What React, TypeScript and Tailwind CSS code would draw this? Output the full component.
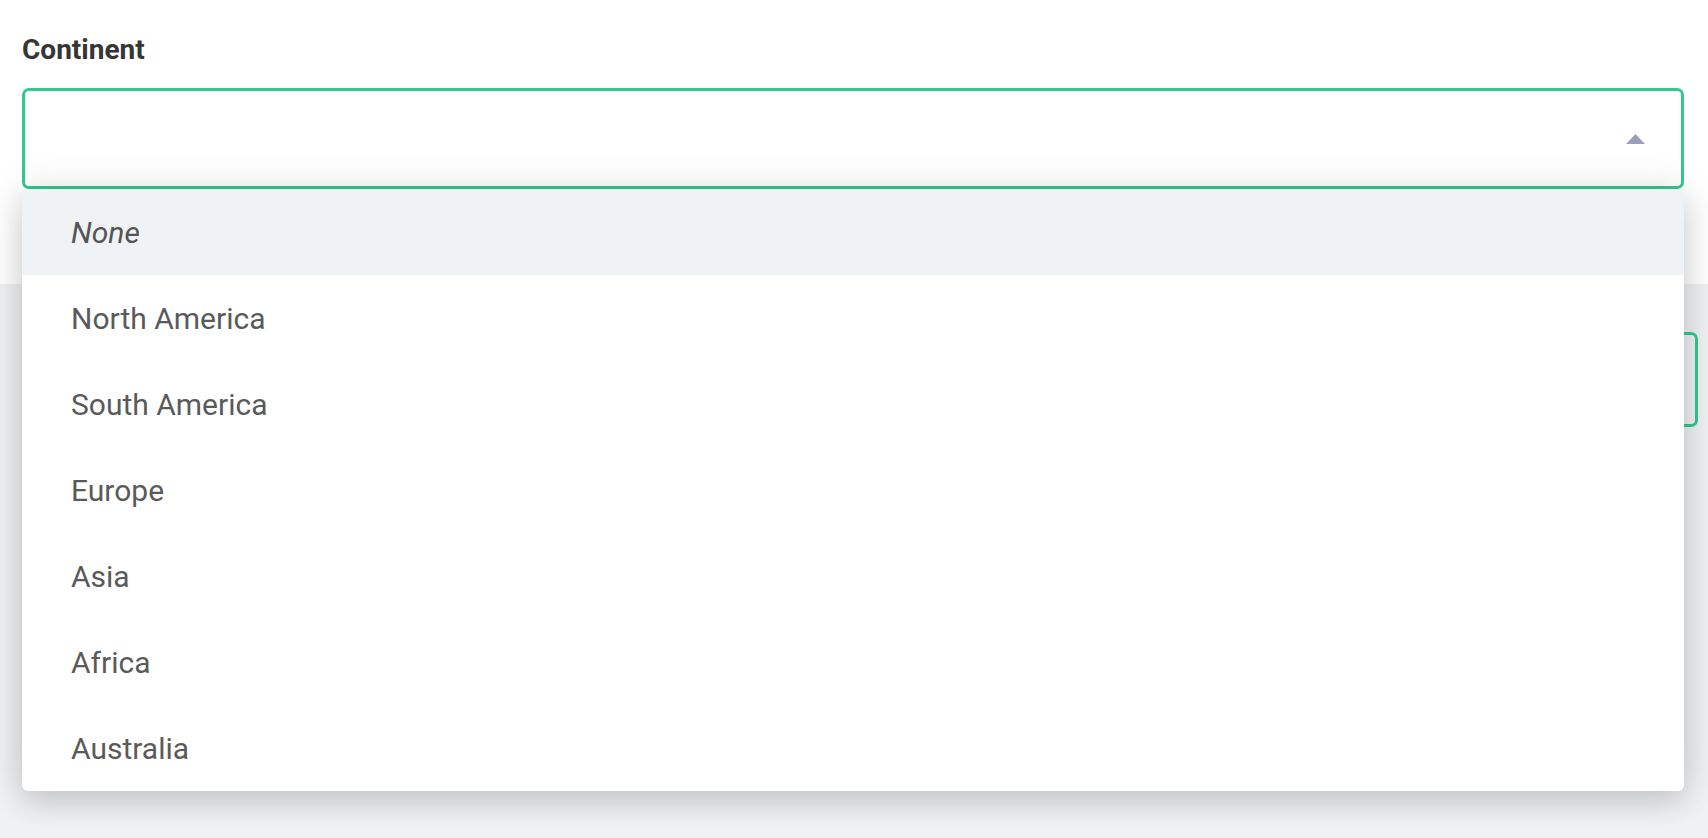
const options = [
  "North America",
  "South America",
  "Europe",
  "Asia",
  "Africa",
  "Australia",
];

const App = () => {
  return (
    <div
      className="relative h-[838px] w-full overflow-hidden bg-[#f0f1f3]"
      style={{ fontFamily: "Roboto, 'Noto Sans', sans-serif" }}
    >
      {/* top card with the open select */}
      <section className="bg-white pl-[22px] pr-[24px] pt-[33px] pb-[95px]">
        <label className="block text-[28px] leading-[34px] font-bold text-[#363636]">
          Continent
        </label>
        <div className="mt-[21px] flex h-[101px] items-center justify-end rounded-[7px] border-[3px] border-[#32c98e] bg-white pr-[36px]">
          <svg width="19" height="10" viewBox="0 0 19 10" className="block">
            <path d="M9.5 0 L19 10 L0 10 Z" fill="#9d9eba" />
          </svg>
        </div>
      </section>

      {/* gray area with the next field, partly covered by the menu */}
      <section className="pl-[22px] pr-[10px] pt-[48px]">
        <div className="h-[95px] rounded-[7px] border-[3px] border-[#32c98e]" />
      </section>

      {/* open dropdown menu */}
      <ul className="absolute left-[22px] top-[190px] w-[1662px] overflow-hidden rounded-[6px] bg-white shadow-[0_0_40px_rgba(0,0,0,0.12),0_12px_30px_rgba(0,0,0,0.12)]">
        <li className="flex h-[85px] items-center bg-[#eff3f6] pl-[49px] text-[30px] italic text-[#555555]">
          None
        </li>
        {options.map((o) => (
          <li
            key={o}
            className="flex h-[86px] items-center pl-[49px] text-[30px] text-[#5a5a5a]"
          >
            {o}
          </li>
        ))}
      </ul>
    </div>
  );
};

export default App;
